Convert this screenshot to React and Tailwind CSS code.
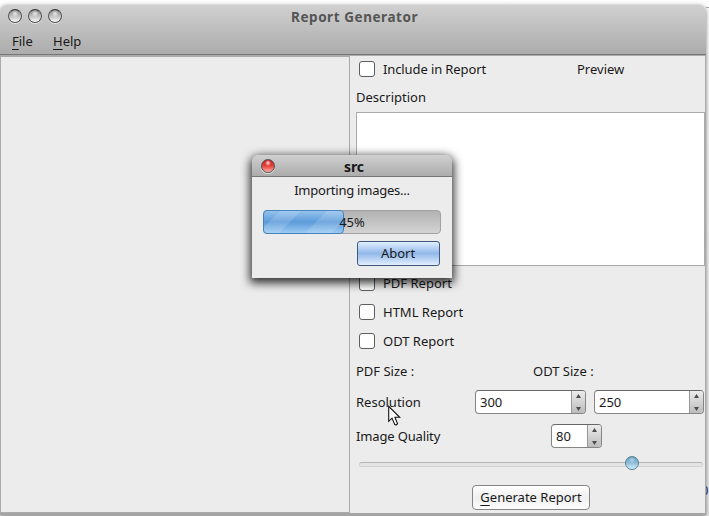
import React from "react";

function Ball({ className }) {
  return (
    <span className={`block h-[14px] w-[14px] shrink-0 rounded-full border border-[#555] shadow-[0_1px_0_#e4e4e4] ${className}`} />
  );
}

const grayBall =
  "border-t-[#333] bg-[radial-gradient(circle_at_50%_30%,#ffffffc0_0%,#ffffff00_35%),linear-gradient(#858585_0%,#b4b4b4_40%,#fafafa_100%)]";

function Check({ label, className = "" }) {
  return (
    <div className={`flex items-center pl-[3px] ${className}`}>
      <span className="h-4 w-4 shrink-0 rounded-[3px] border border-[#5e5e5e] bg-white" />
      <span className="ml-2">{label}</span>
    </div>
  );
}

function Mnemonic({ children }) {
  return <span className="underline decoration-1 underline-offset-[3px]">{children}</span>;
}

function Spin({ value, className }) {
  return (
    <div className={`flex h-6 shrink-0 overflow-hidden rounded-[4px] border border-[#858585] border-t-[#686868] bg-white ${className}`}>
      <span className="flex-1 pl-1 leading-[23px]">{value}</span>
      <span className="flex w-[14px] items-center justify-center border-l border-[#999] bg-linear-to-b from-[#ececec] to-[#bcbcbc]">
        <svg width="5" height="17" viewBox="0 0 5 17" fill="#4b4b4b">
          <path d="M0 4 L2.5 0 L5 4Z" />
          <path d="M0 13 L5 13 L2.5 17Z" />
        </svg>
      </span>
    </div>
  );
}

function Dialog() {
  return (
    <div className="absolute left-[252px] top-[155px] z-20 flex h-[123px] w-[200px] flex-col rounded-t-[7px] bg-[#ececec] shadow-[0_3px_10px_2px_rgba(0,0,0,0.8)]">
      <div className="relative h-[22px] shrink-0 rounded-t-[7px] border-b border-[#777] bg-linear-to-b from-[#d0d0d0] to-[#acacac] pl-[9px] pt-1">
        <Ball className="border-[#6c2424] bg-[radial-gradient(circle_at_50%_25%,#ffe4e4_0%,#ffe4e400_28%),linear-gradient(#c82222_0%,#e23a32_45%,#ffb0a8_100%)]" />
        <span className="absolute left-[92px] top-[3px] text-[14px] font-bold leading-[18px] tracking-[-0.1px] text-[#171717]">src</span>
      </div>
      <div className="mt-[5px] h-[17px] text-center leading-[17px] tracking-[-0.23px]">Importing images...</div>
      <div className="relative ml-[11px] mt-[11px] h-6 w-[178px] rounded-[4px] border border-[#a2a2a2] bg-linear-to-b from-[#b2b2b2] to-[#d3d3d3]">
        <div className="-ml-px -mt-px flex h-6 w-[81px] overflow-hidden rounded-[4px] border border-[#4583bf] bg-linear-to-b from-[#94c2ec] via-[#5c9bda] to-[#9bcaf3]">
          <svg className="shrink-0" width="80" height="22" viewBox="0 0 80 22" fill="#fff" fillOpacity="0.14">
            <path d="M16 0H37L15 22H-6Z" />
            <path d="M63 0H90L68 22H41Z" />
          </svg>
        </div>
        <span className="absolute inset-0 text-center leading-[23px]">45%</span>
      </div>
      <div className="ml-[105px] mt-[7px] h-[25px] w-[83px] rounded-[3px] border border-[#43577c] bg-linear-to-b from-[#e1efff] via-[#92b8e9] to-[#e2efff] pr-px text-center leading-[23px]">
        Abort
      </div>
    </div>
  );
}

export default function App() {
  return (
    <div className="relative h-[516px] w-[709px] overflow-hidden bg-linear-to-b from-[#fdfdfd] to-[#e9e9e9] font-['Noto_Sans','Open_Sans',sans-serif] text-[13px] leading-[18px] text-[#191919]">
      <div className="flex h-full flex-col pt-[5px]">
        <div className="relative z-10 flex h-[510px] w-[706px] flex-col rounded-tr-[7px] rounded-tl-[7px] border-b-2 border-[#a5a5a5] bg-[#ececec] shadow-[0_1px_4px_rgba(0,0,0,0.5)]">
          <header className="relative flex h-[50px] shrink-0 flex-col rounded-t-[7px] border-b border-[#777] bg-linear-to-b from-[#d0d0d0] to-[#acacac]">
            <div className="flex gap-[6px] pl-2 pt-1">
              <Ball className={grayBall} />
              <Ball className={grayBall} />
              <Ball className={grayBall} />
            </div>
            <span className="absolute left-[291px] top-[3px] text-[13.5px] font-bold tracking-[0.56px] text-[#555]">Report Generator</span>
            <nav className="mt-[9px] flex pl-3">
              <span className="w-[41px]"><Mnemonic>F</Mnemonic>ile</span>
              <span><Mnemonic>H</Mnemonic>elp</span>
            </nav>
          </header>
          <main className="flex min-h-0 flex-1 border-t border-r border-[#aaa]">
            <section className="w-[350px] shrink-0 border border-[#aaa]" />
            <section className="flex w-[355px] flex-col pl-[6px]">
              <div className="flex h-[26px] items-center">
                <Check label="Include in Report" className="w-[221px] tracking-[-0.11px]" />
                <span>Preview</span>
              </div>
              <div className="mt-[6px] h-[18px]">Description</div>
              <div className="mt-[6px] h-[154px] shrink-0 border border-[#aaa] bg-white" />
              <Check label="PDF Report" className="mt-[2px] h-[29px]" />
              <Check label="HTML Report" className="h-[29px]" />
              <Check label="ODT Report" className="h-[29px]" />
              <div className="mt-[7px] flex h-[18px]">
                <span className="w-[177px]">PDF Size :</span>
                <span>ODT Size :</span>
              </div>
              <div className="mt-[10px] flex h-6 items-center">
                <span className="w-[119px]">Resolution</span>
                <Spin value="300" className="w-[111px]" />
                <Spin value="250" className="ml-2 w-[110px]" />
              </div>
              <div className="mt-[10px] flex h-6 items-center">
                <span className="w-[195px] tracking-[-0.15px]">Image Quality</span>
                <Spin value="80" className="w-[51px]" />
              </div>
              <div className="ml-[3px] mt-2 flex h-[14px] w-[344px] items-center">
                <div className="mt-[2px] h-[5px] w-full rounded-full border border-[#d2d2d2] border-t-[#b4b4b4] bg-[#e4e4e4]" />
                <Ball className="-ml-[78px] mr-16 border-[#557d96] bg-[radial-gradient(circle_at_50%_25%,#b4d9ed_0%,#b4d9ed00_30%),linear-gradient(#6c9fbd_0%,#8bbad6_45%,#d2efff_100%)]" />
              </div>
              <div className="ml-[116px] mt-[15px] h-[25px] w-[118px] shrink-0 rounded-[4px] border border-[#858585] bg-linear-to-b from-white via-[#efefef] to-[#fdfdfd] text-center leading-[23px]">
                <Mnemonic>G</Mnemonic>enerate Report
              </div>
            </section>
          </main>
        </div>
      </div>
      <div className="absolute right-0 top-[7px] h-px w-[3px] bg-[#aaa]" />
      <div className="absolute left-[701px] top-[481px] text-[#183b83]">0</div>
      <Dialog />
      <svg className="absolute left-[388px] top-[405px] z-20" width="13" height="22" viewBox="0 0 13 22">
        <path d="M0.7 1.3V16.3L4 13.1L6.8 19.6Q8.3 20.5 9.5 18.6L6.9 12.3H11.7Z" fill="#fff" stroke="#111" strokeWidth="1.1" />
      </svg>
    </div>
  );
}
